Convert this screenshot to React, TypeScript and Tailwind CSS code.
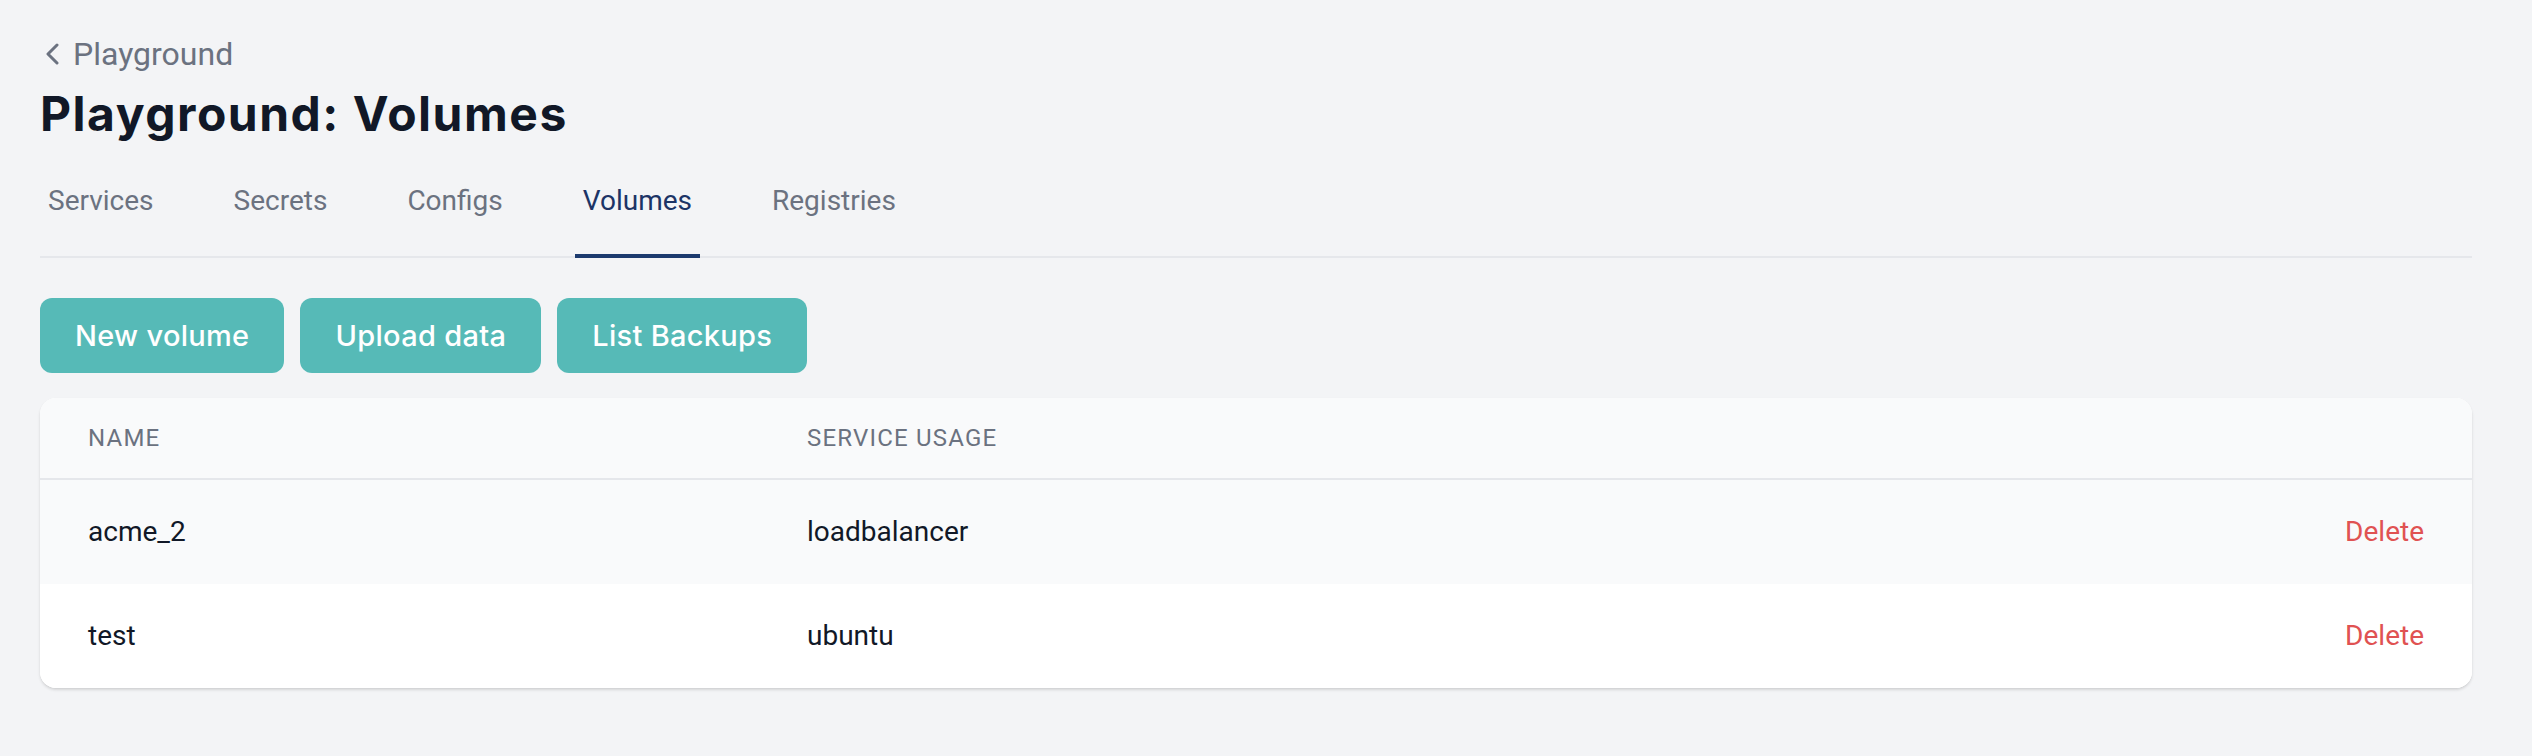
import React from "react";

const tabs = ["Services", "Secrets", "Configs", "Volumes", "Registries"];
const rows = [
  { name: "acme_2", usage: "loadbalancer" },
  { name: "test", usage: "ubuntu" },
];

export default function App() {
  return (
    <div
      className="min-h-[756px] w-full bg-[#f3f4f6] pl-[40px] pr-[60px] pt-[30px]"
      style={{ fontFamily: "Roboto, 'Liberation Sans', sans-serif" }}
    >
      <div className="flex h-[48px] items-center text-[32px] leading-[48px] text-[#6b7280]">
        <svg width="16" height="22" viewBox="0 0 16 22" className="mr-[13px] ml-[4px]">
          <polyline
            points="13,2 4,11 13,20"
            fill="none"
            stroke="#6b7280"
            strokeWidth="3"
            strokeLinecap="round"
            strokeLinejoin="round"
          />
        </svg>
        <span>Playground</span>
      </div>
      <h1
        className="mt-[4px] h-[64px] text-[48px] font-bold leading-[64px] tracking-[1.5px] text-[#111827]"
        style={{ fontFamily: "Inter, 'Noto Sans', sans-serif" }}
      >
        Playground: Volumes
      </h1>
      <nav className="mt-[35px] flex gap-[64px] border-b-2 border-[#e5e7eb]">
        {tabs.map((t) => {
          const active = t === "Volumes";
          return (
            <div
              key={t}
              className={
                active
                  ? "-mb-[2px] border-b-4 border-[#1c3a6e] px-[8px] pb-[33px] text-[28px] leading-[40px] text-[#1c3466]"
                  : "-mb-[2px] border-b-4 border-transparent px-[8px] pb-[33px] text-[28px] leading-[40px] text-[#6b7280]"
              }
            >
              {t}
            </div>
          );
        })}
      </nav>
      <div className="mt-[40px] flex gap-[16px]" style={{ fontFamily: "Inter, 'Noto Sans', sans-serif" }}>
        {["New volume", "Upload data", "List Backups"].map((b) => (
          <button
            key={b}
            className="flex h-[75px] items-center rounded-[12px] bg-[#56bab7] px-[35px] text-[29px] font-medium tracking-[0.3px] text-white"
          >
            {b}
          </button>
        ))}
      </div>
      <div className="mt-[25px] overflow-hidden rounded-[16px] bg-white shadow-[0_2px_3px_0_rgba(0,0,0,0.12),0_1px_2px_-1px_rgba(0,0,0,0.1)]">
        <div className="grid h-[82px] grid-cols-[719px_1fr_auto] items-center border-b-2 border-[#e5e7eb] bg-[#f9fafb] text-[24px] uppercase tracking-[1.2px] text-[#6b7280]">
          <div className="px-[48px]">Name</div>
          <div className="px-[48px]">Service usage</div>
          <div className="px-[48px]"></div>
        </div>
        {rows.map((r, i) => (
          <div
            key={r.name}
            className={
              i === 0
                ? "grid h-[104px] grid-cols-[719px_1fr_auto] items-center bg-[#f9fafb] text-[28px] text-[#111827]"
                : "grid h-[104px] grid-cols-[719px_1fr_auto] items-center bg-white text-[28px] text-[#111827]"
            }
          >
            <div className="px-[48px]">{r.name}</div>
            <div className="px-[48px]">{r.usage}</div>
            <div className="px-[48px] text-[#e05252]">Delete</div>
          </div>
        ))}
      </div>
    </div>
  );
}
